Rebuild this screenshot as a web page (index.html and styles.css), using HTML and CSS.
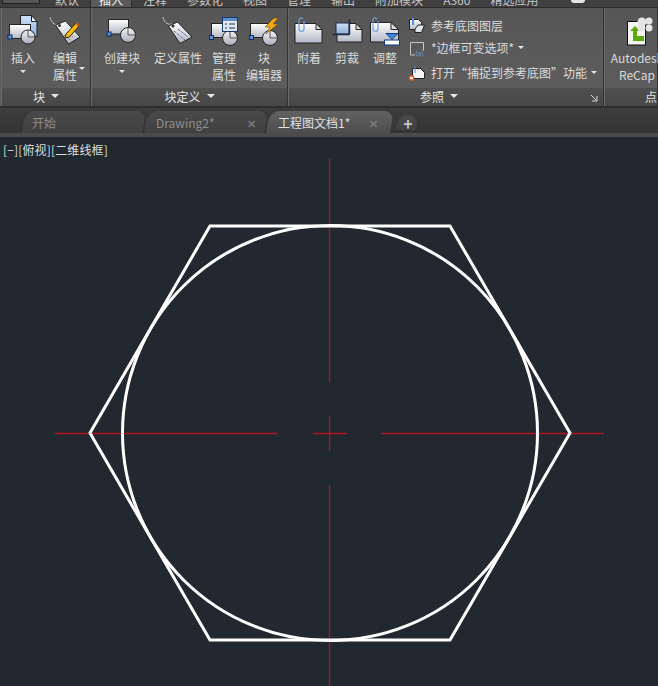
FILE: index.html
```html
<!DOCTYPE html>
<html lang="zh-CN">
<head>
    <meta charset="UTF-8">
    <meta name="viewport" content="width=device-width, initial-scale=1.0">
    <title>工程图文档1</title>
    <link rel="stylesheet" href="styles.css">
</head>
<body>

    <!-- shared gradients for the ribbon icons -->
    <svg class="defs" width="0" height="0">
        <defs>
            <linearGradient id="sheet" x1="0" y1="0" x2="0" y2="1">
                <stop offset="0" stop-color="#ffffff"/>
                <stop offset="1" stop-color="#b4b8c8"/>
            </linearGradient>
            <linearGradient id="disc" x1="0" y1="0" x2="0" y2="1">
                <stop offset="0" stop-color="#f4f4f6"/>
                <stop offset="1" stop-color="#a9acbc"/>
            </linearGradient>
            <linearGradient id="blue" x1="0" y1="0" x2="0" y2="1">
                <stop offset="0" stop-color="#cfe0f6"/>
                <stop offset="1" stop-color="#8fb0dc"/>
            </linearGradient>
        </defs>
    </svg>

    <div class="app">
        <div class="tab-row">
            <div class="quick-btn"></div>
            <div class="rtab">默认</div>
            <div class="rtab active">插入</div>
            <div class="rtab">注释</div>
            <div class="rtab">参数化</div>
            <div class="rtab">视图</div>
            <div class="rtab">管理</div>
            <div class="rtab">输出</div>
            <div class="rtab">附加模块</div>
            <div class="rtab">A360</div>
            <div class="rtab">精选应用</div>
            <div class="tab-widget"></div>
        </div>

        <div class="ribbon">
            <section class="panel panel-block">
                <div class="panel-body">
                    <div class="tool tool-insert">
                        <svg class="icon" width="40" height="34" viewBox="3 14 40 34">
                            <path d="M20.5 15.5h11l5.5 6v15H20.5z" fill="url(#blue)" stroke="#222"/>
                            <path d="M31.5 15.5v6h5.5z" fill="#eef2fa" stroke="#222"/>
                            <rect x="9.5" y="24.5" width="21" height="14" fill="url(#sheet)" stroke="#222"/>
                            <circle cx="28" cy="37" r="7" fill="url(#disc)" stroke="#222"/>
                            <path d="M28 30v7h7" fill="none" stroke="#555"/>
                            <rect x="8" y="35" width="4" height="4" fill="#5b8fd6" stroke="#0c2f66"/>
                        </svg>
                        <div class="label">插入</div>
                        <div class="arrow"></div>
                    </div>
                    <div class="tool tool-attr">
                        <svg class="icon" width="40" height="34" viewBox="45 14 40 34">
                            <path d="M50 17c1 5 4 8 9 8" fill="none" stroke="#c4c4c4"/>
                            <path d="M55.5 25l10-4 14.500 16-11.500 7z" fill="url(#sheet)" stroke="#222"/>
                            <circle cx="59.500" cy="25.500" r="1.500" fill="#333"/>
                            <path d="M64 35l6 5M67 32l6 5" stroke="#777" stroke-dasharray="2 1"/>
                            <path d="M66 34L76 23l3 3-9.500 11-4.500 1z" fill="#f2b90f" stroke="#3a2a00"/>
                            <path d="M76 23l3 3" stroke="#c4552a" stroke-width="2"/>
                        </svg>
                        <div class="label">编辑<br>属性</div>
                        <div class="arrow arrow-side"></div>
                    </div>
                </div>
                <div class="panel-title">块<span class="arrow arrow-title"></span></div>
            </section>

            <section class="panel panel-def">
                <div class="panel-body">
                    <div class="tool tool-create">
                        <svg class="icon" width="40" height="34" viewBox="102 14 40 34">
                            <rect x="108.500" y="19.500" width="20" height="14.500" fill="url(#sheet)" stroke="#222"/>
                            <circle cx="128" cy="35" r="7.500" fill="url(#disc)" stroke="#222"/>
                            <path d="M128 27.500V35h7.500" fill="none" stroke="#555"/>
                            <rect x="107" y="32" width="4" height="4" fill="#5b8fd6" stroke="#0c2f66"/>
                        </svg>
                        <div class="label">创建块</div>
                        <div class="arrow"></div>
                    </div>
                    <div class="tool tool-define">
                        <svg class="icon" width="40" height="34" viewBox="158 14 40 34">
                            <path d="M163 17c1 5 4 8 9 7" fill="none" stroke="#c4c4c4"/>
                            <path d="M168.500 26l9-4 14.500 15-12 6.500z" fill="url(#sheet)" stroke="#222"/>
                            <circle cx="173" cy="26" r="1.500" fill="#333"/>
                            <path d="M174 31l11 9M178 29l10 8" stroke="#6c6c78" stroke-dasharray="3 1"/>
                        </svg>
                        <div class="label">定义属性</div>
                    </div>
                    <div class="tool tool-manage">
                        <svg class="icon" width="40" height="34" viewBox="204 14 40 34">
                            <rect x="211.500" y="23.500" width="20" height="14" fill="url(#sheet)" stroke="#222"/>
                            <circle cx="230" cy="38" r="7.500" fill="url(#disc)" stroke="#222"/>
                            <path d="M230 30.500V38h7.500" fill="none" stroke="#555"/>
                            <rect x="209.500" y="35.500" width="4" height="4" fill="#5b8fd6" stroke="#0c2f66"/>
                            <rect x="222.500" y="17.500" width="15" height="14" fill="#dfe8f6" stroke="#153a70"/>
                            <rect x="223" y="18" width="14" height="3" fill="#5c8ccc"/>
                            <path d="M225 24h2M229 24h6M225 28h2M229 28h6" stroke="#234"/>
                        </svg>
                        <div class="label">管理<br>属性</div>
                    </div>
                    <div class="tool tool-editor">
                        <svg class="icon" width="40" height="34" viewBox="244 14 40 34">
                            <rect x="250.500" y="23.500" width="20" height="14" fill="url(#sheet)" stroke="#222"/>
                            <circle cx="270" cy="38" r="7.500" fill="url(#disc)" stroke="#222"/>
                            <path d="M270 30.500V38h7.500" fill="none" stroke="#555"/>
                            <rect x="249.500" y="35.500" width="4" height="4" fill="#5b8fd6" stroke="#0c2f66"/>
                            <path d="M274 18l-9 9h5l-4 7 12-10h-5l5-6z" fill="#f4a912" stroke="#7a4a00" stroke-width=".6"/>
                        </svg>
                        <div class="label">块<br>编辑器</div>
                    </div>
                </div>
                <div class="panel-title">块定义<span class="arrow arrow-title"></span></div>
            </section>

            <section class="panel panel-ref">
                <div class="panel-body">
                    <div class="tool tool-attach">
                        <svg class="icon" width="40" height="34" viewBox="289 14 40 34">
                            <path d="M295 23.500h21l6 6v13.500h-27z" fill="url(#sheet)" stroke="#222"/>
                            <path d="M316 23.500v6h6z" fill="#ddd" stroke="#222"/>
                            <path d="M303 19c-2-2-4-1-4 1v9c0 3 5 3 5 0V21" fill="none" stroke="#6f9fdc" stroke-width="1.200"/>
                        </svg>
                        <div class="label">附着</div>
                    </div>
                    <div class="tool tool-clip">
                        <svg class="icon" width="40" height="34" viewBox="327 14 40 34">
                            <path d="M337 23.500h19l6 6v12.500h-25z" fill="url(#sheet)" stroke="#222"/>
                            <path d="M356 23.500v6h6z" fill="#ddd" stroke="#222"/>
                            <rect x="336" y="23" width="13" height="11" fill="url(#blue)" stroke="#1c2c44"/>
                            <path d="M349.500 19v15.500M332 34.500h17.500" stroke="#1c2c44" stroke-width="1.400"/>
                        </svg>
                        <div class="label">剪裁</div>
                    </div>
                    <div class="tool tool-adjust">
                        <svg class="icon" width="40" height="34" viewBox="365 14 40 34">
                            <path d="M370.500 22.500h20l8 7v12.500h-28z" fill="url(#sheet)" stroke="#222"/>
                            <path d="M391 22.500v7h7.500z" fill="#ddd" stroke="#222"/>
                            <path d="M377 19c-2-2-4-1-4 1v9c0 3 5 3 5 0V21" fill="none" stroke="#6f9fdc" stroke-width="1.200"/>
                            <rect x="384.500" y="40" width="15" height="5" fill="#fff" stroke="#123a80"/>
                            <path d="M386 33.500h12l-6 6z" fill="#3f86d8" stroke="#123a80"/>
                        </svg>
                        <div class="label">调整</div>
                    </div>
                    <div class="ref-list">
                        <div class="ref-row">
                            <svg width="18" height="18" viewBox="408 16 18 18">
                                <path d="M409.500 19.500h9l3 3v7h-12z" fill="url(#sheet)" stroke="#222"/>
                                <path d="M413 18v7" stroke="#5b8fd6" stroke-width="2"/>
                                <path d="M415 29l3-4h6.500l-3 7.500H415z" fill="#dfe3ee" stroke="#222"/>
                            </svg>
                            <span>参考底图图层</span>
                        </div>
                        <div class="ref-row">
                            <svg width="18" height="18" viewBox="408 38 18 18" overflow="visible">
                                <path d="M415 55h-4.500V42.500h13v8" fill="none" stroke="#c8c8c8"/>
                                <text class="var-mark" x="415.500" y="56">(x)</text>
                            </svg>
                            <span>*边框可变选项*</span>
                            <div class="arrow"></div>
                        </div>
                        <div class="ref-row row-open">
                            <svg width="18" height="18" viewBox="408 63 18 18">
                                <path d="M412.500 68.500h8l4 4v6h-12z" fill="#f4f4f6" stroke="#222"/>
                                <path d="M415 66v7" stroke="#5b8fd6"/>
                                <rect x="409.500" y="76" width="4" height="4" rx="1" fill="#fff" stroke="#e0561c" stroke-width="1.500"/>
                            </svg>
                            <span>打开“捕捉到参考底图”功能</span>
                            <div class="arrow"></div>
                        </div>
                    </div>
                </div>
                <div class="panel-title title-ref">
                    参照<span class="arrow arrow-title"></span>
                    <svg class="launcher" width="8" height="8" viewBox="0 0 8 8">
                        <path d="M1 1l5 5M7 2v5H2" fill="none" stroke="#ddd"/>
                    </svg>
                </div>
            </section>

            <section class="panel panel-point">
                <div class="panel-body">
                    <div class="tool tool-recap">
                        <svg class="icon" width="40" height="34" viewBox="617 14 40 34">
                            <rect x="627.500" y="21.500" width="18" height="23.500" fill="#f4f6f2" stroke="#111"/>
                            <path d="M630 31l5-5 5 5h-3v5h7v5h-11V31z" fill="#5aa80a"/>
                            <circle cx="642" cy="22" r="4.500" fill="#e4e4e4"/>
                            <circle cx="649" cy="21" r="3.500" fill="#e4e4e4"/>
                            <circle cx="641" cy="28" r="3.500" fill="#e4e4e4"/>
                            <circle cx="649" cy="28" r="3.500" fill="#e4e4e4"/>
                        </svg>
                        <div class="label">Autodesk<br>ReCap</div>
                    </div>
                </div>
                <div class="panel-title title-point">点</div>
            </section>
        </div>

        <div class="doc-tabs">
            <div class="doc-tab tab-start">开始</div>
            <div class="doc-tab">Drawing2*<span class="close">✕</span></div>
            <div class="doc-tab current">工程图文档1*<span class="close">✕</span></div>
            <div class="doc-tab add">+</div>
        </div>
        <div class="doc-strip"></div>

        <div class="canvas">
            <div class="view-label">[−][俯视][二维线框]</div>
            <svg class="drawing" width="658" height="549" viewBox="0 137 658 549">
                <g class="center-lines">
                    <line x1="55" y1="433.500" x2="278" y2="433.500"/>
                    <line x1="313" y1="433.500" x2="347" y2="433.500"/>
                    <line x1="381" y1="433.500" x2="604" y2="433.500"/>
                    <line x1="329.500" y1="159" x2="329.500" y2="382"/>
                    <line x1="329.500" y1="416" x2="329.500" y2="451"/>
                    <line x1="329.500" y1="485" x2="329.500" y2="686"/>
                </g>
                <g class="outline">
                    <polygon points="90,433 210,226 450,226 570,433 450,640 210,640"/>
                    <circle cx="330" cy="433" r="207.500"/>
                </g>
            </svg>
        </div>
    </div>

</body>
</html>
```

FILE: styles.css
```css
html, body {
    margin: 0;
    height: 100%;
    overflow: hidden;
}

body {
    font-family: "Noto Sans CJK SC", "Noto Sans", sans-serif;
    font-size: 12px;
    background-color: #212830;
    color: #dcdcdc;
}

.defs {
    display: block;
    height: 0;
}

.app {
    display: flex;
    flex-direction: column;
    width: 658px;
    height: 686px;
}

/* top tab row, cropped by the window edge */
.tab-row {
    display: flex;
    align-items: flex-end;
    height: 8px;
    overflow: hidden;
    background-color: #3f3f3f;
    border-bottom: 1px solid #2c2c2c;
    box-sizing: border-box;
    padding-left: 2px;
}

.quick-btn {
    flex: none;
    width: 36px;
    height: 3px;
    align-self: flex-start;
    margin-right: 5px;
    background-color: #555;
    border: 1px solid #222;
    border-top: none;
}

.rtab {
    flex: none;
    height: 15px;
    line-height: 15px;
    padding: 0 10px;
    color: #c4c4c4;
}

.rtab.active {
    margin: 0 2px;
    padding: 0 8px;
    color: #f0f0f0;
    background-color: #595959;
    box-shadow: 0 0 0 1px #2c2c2c;
}

.tab-widget {
    flex: none;
    align-self: flex-start;
    width: 14px;
    height: 3px;
    margin-left: 23px;
    background-color: #e4e4e4;
    border-radius: 0 0 3px 3px;
}

/* ribbon */
.ribbon {
    display: flex;
    height: 100px;
    background: linear-gradient(#565656, #5e5e5e);
    border-bottom: 2px solid #2e2e2e;
    box-sizing: border-box;
}

.panel {
    flex: none;
    display: flex;
    flex-direction: column;
    box-sizing: border-box;
    border-right: 1px solid #333;
    border-left: 1px solid #6a6a6a;
}

.panel-block { width: 90px; margin-left: 1px; }
.panel-def { width: 197px; }
.panel-ref { width: 316px; }
.panel-point { width: 54px; }

.panel-body {
    flex: 1;
    display: flex;
    min-height: 0;
}

.panel-title {
    display: flex;
    align-items: center;
    justify-content: center;
    gap: 6px;
    box-sizing: border-box;
    height: 18px;
    padding-bottom: 2px;
    color: #e4e4e4;
    background: linear-gradient(#4f4f4f, #474747);
}

.title-ref {
    position: relative;
    padding-right: 14px;
}

.title-point {
    justify-content: flex-start;
    padding-left: 40px;
}

.launcher {
    position: absolute;
    right: 5px;
    top: 6px;
}

.tool {
    position: relative;
    flex: none;
    display: flex;
    flex-direction: column;
    align-items: center;
    box-sizing: border-box;
    padding-top: 6px;
    text-align: center;
}

.icon {
    flex: none;
    display: block;
}

.label {
    margin-top: 1px;
    line-height: 17px;
    white-space: nowrap;
}

.arrow {
    flex: none;
    width: 0;
    height: 0;
    border-left: 3px solid transparent;
    border-right: 3px solid transparent;
    border-top: 3px solid #e6e6e6;
}

.tool > .arrow {
    margin-top: 4px;
}

.tool > .arrow-side {
    position: absolute;
    right: 1px;
    top: 59px;
    margin: 0;
}

.arrow-title {
    border-left-width: 4px;
    border-right-width: 4px;
    border-top-width: 4px;
}

.tool-insert { width: 42px; }
.tool-attr { width: 42px; }
.tool-create { width: 60px; }
.tool-define { width: 52px; }
.tool-manage { width: 40px; }
.tool-editor { width: 40px; }
.tool-attach { width: 40px; }
.tool-clip { width: 36px; }
.tool-adjust { width: 40px; }
.tool-recap { width: 64px; }

.ref-list {
    display: flex;
    flex-direction: column;
    gap: 2px;
    margin-left: 3px;
    padding-top: 7px;
}

.ref-row {
    display: flex;
    align-items: center;
    gap: 5px;
    height: 20px;
    white-space: nowrap;
}

.row-open {
    margin-top: 3px;
}

.ref-row .arrow {
    margin-left: -1px;
}

.var-mark {
    font-size: 7px;
    fill: #6f9fdc;
}

/* document tabs */
.doc-tabs {
    display: flex;
    align-items: flex-end;
    height: 25px;
    padding-left: 24px;
    background: linear-gradient(#3c3c3c, #343434);
}

.doc-tab {
    position: relative;
    z-index: 0;
    flex: none;
    display: flex;
    align-items: center;
    box-sizing: border-box;
    width: 122px;
    height: 22px;
    padding: 1px 8px 0 10px;
    color: #8c8c8c;
}

.doc-tab::before {
    content: "";
    position: absolute;
    inset: 0 2px 0 0;
    z-index: -1;
    background: linear-gradient(#4a4a4a, #404040);
    border-radius: 10px 10px 0 0;
    transform: skewX(-10deg);
}

.doc-tab.tab-start {
    padding-left: 8px;
}

.doc-tab.current {
    color: #e0e0e0;
}

.doc-tab.current::before {
    inset: 0 -2px 0 0;
    background: linear-gradient(#626262, #4c4c4c);
}

.doc-tab.add {
    justify-content: center;
    width: 22px;
    height: 15px;
    margin: 0 0 3px 7px;
    padding: 0;
    font-size: 16px;
    font-weight: bold;
    color: #c8c8c8;
}

.close {
    margin-left: auto;
    margin-right: 4px;
    font-size: 11px;
    font-weight: bold;
    color: #777;
}

.doc-strip {
    height: 4px;
    background-color: #4b4b4b;
}

/* drawing area */
.canvas {
    position: relative;
    flex: 1;
    min-height: 0;
    background-color: #212830;
}

.drawing {
    display: block;
}

.view-label {
    position: absolute;
    left: 3px;
    top: 5px;
    line-height: 16px;
    letter-spacing: 0.15px;
    color: #dedede;
    white-space: nowrap;
}

.center-lines line {
    stroke: #b3141b;
    stroke-width: 1.3;
}

.outline polygon,
.outline circle {
    fill: none;
    stroke: #ffffff;
    stroke-width: 3;
}
```
